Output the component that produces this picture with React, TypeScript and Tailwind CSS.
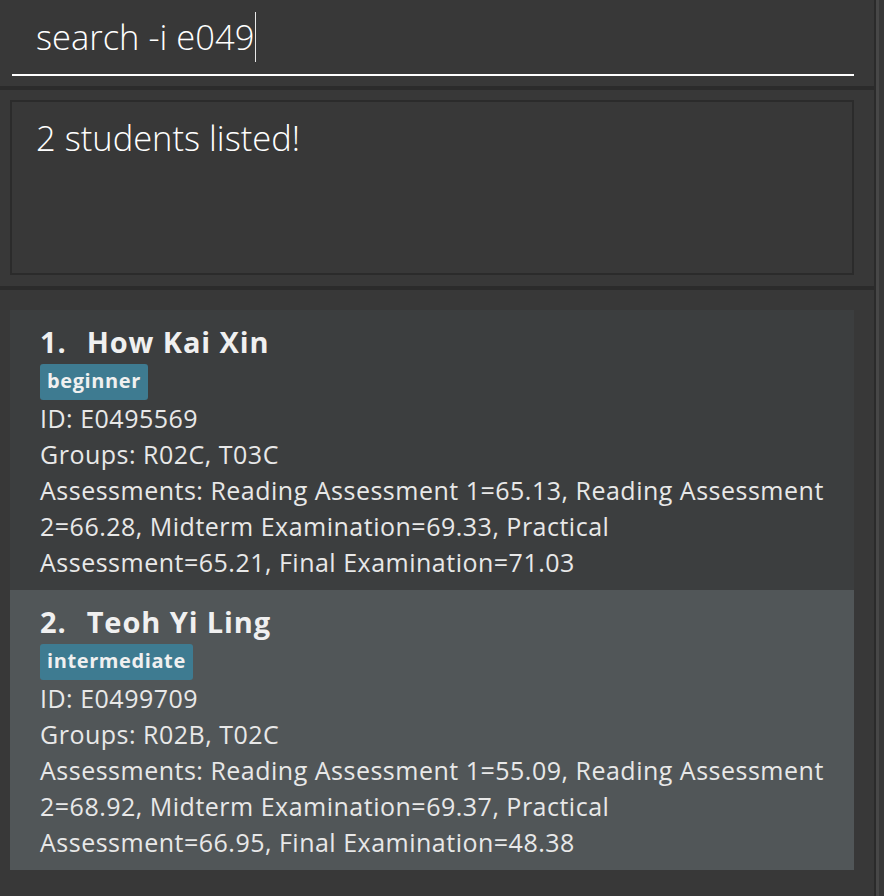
type Student = {
  index: number;
  name: string;
  tag: string;
  id: string;
  groups: string;
  assessments: string;
};

const students: Student[] = [
  {
    index: 1,
    name: "How Kai Xin",
    tag: "beginner",
    id: "E0495569",
    groups: "R02C, T03C",
    assessments:
      "Reading Assessment 1=65.13, Reading Assessment 2=66.28, Midterm Examination=69.33, Practical Assessment=65.21, Final Examination=71.03",
  },
  {
    index: 2,
    name: "Teoh Yi Ling",
    tag: "intermediate",
    id: "E0499709",
    groups: "R02B, T02C",
    assessments:
      "Reading Assessment 1=55.09, Reading Assessment 2=68.92, Midterm Examination=69.37, Practical Assessment=66.95, Final Examination=48.38",
  },
];

function StudentCard({ student, odd }: { student: Student; odd: boolean }) {
  return (
    <div
      className={`flex flex-col pt-[10px] pb-[10px] pl-[30px] pr-[20px] ${
        odd ? "bg-[#515658]" : "bg-[#3c3e3f]"
      }`}
    >
      <div className="flex gap-[20px] text-[29px] font-bold leading-[44px] tracking-[0.9px] text-[#f0f0f0]">
        <span>{student.index}.</span>
        <span>{student.name}</span>
      </div>
      <div className="flex">
        <span className="h-[36px] rounded-[3px] bg-[#3e7b91] px-[7px] pb-[3px] text-[20px] font-bold leading-[33px] tracking-[0.6px] text-[#f0f0f0]">
          {student.tag}
        </span>
      </div>
      <div className="text-[25px] leading-[36px] tracking-[0.5px] text-[#e8e8e8]">
        <div>ID: {student.id}</div>
        <div>Groups: {student.groups}</div>
        <div>Assessments: {student.assessments}</div>
      </div>
    </div>
  );
}

export default function App() {
  return (
    <div
      className="flex h-[896px] w-[884px] overflow-hidden bg-[#383838]"
      style={{ fontFamily: "'Open Sans', 'Noto Sans', sans-serif" }}
    >
      <div className="flex w-[874px] flex-col">
        {/* command box */}
        <div className="flex h-[86px] flex-col pt-[12px]">
          <div className="flex h-[50px] items-center pl-[36px]">
            <span className="text-[34.5px] font-light leading-[50px] text-white">search -i e049</span>
            <span className="ml-[1px] h-[50px] w-[1px] bg-[#e8e8e8]" />
          </div>
          <div className="mt-[12px] ml-[12px] mr-[20px] h-[2px] bg-white" />
        </div>
        <div className="h-[4px] bg-[#2b2b2b]" />

        {/* result display */}
        <div className="pt-[10px] pb-[11px] pl-[10px] pr-[20px]">
          <div className="h-[175px] border-2 border-[#2b2b2b] pt-[12px] pl-[24px]">
            <span className="text-[34.5px] font-light leading-[48px] text-white">2 students listed!</span>
          </div>
        </div>
        <div className="h-[4px] bg-[#2b2b2b]" />

        {/* student list */}
        <div className="flex flex-col pt-[20px] pl-[10px] pr-[20px]">
          {students.map((s, i) => (
            <StudentCard key={s.id} student={s} odd={i % 2 === 1} />
          ))}
        </div>
      </div>
      <div className="w-[2px] bg-[#2b2b2b]" />
      <div className="w-[3px] bg-[#474747]" />
    </div>
  );
}
